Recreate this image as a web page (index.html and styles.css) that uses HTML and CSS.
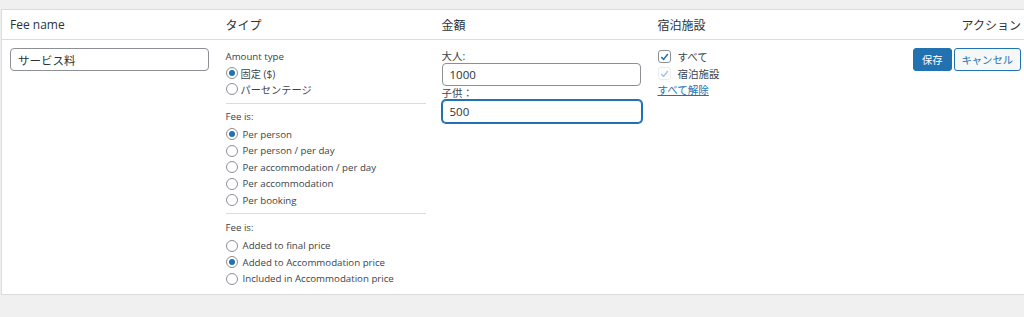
FILE: index.html
```html
<!DOCTYPE html>
<html lang="ja">
<head>
  <meta charset="UTF-8">
  <title>Fees</title>
  <link rel="stylesheet" href="styles.css">
</head>
<body>

  <table class="fees-table">
    <colgroup>
      <col class="col-fixed">
      <col class="col-fixed">
      <col class="col-fixed">
      <col class="col-fixed">
      <col>
    </colgroup>
    <thead>
      <tr>
        <th>Fee name</th>
        <th>タイプ</th>
        <th>金額</th>
        <th>宿泊施設</th>
        <th class="col-actions">アクション</th>
      </tr>
    </thead>
    <tbody>
      <tr>
        <td>
          <input type="text" class="text-input" value="サービス料">
        </td>
        <td>
          <div class="group first">
            <div class="group-title">Amount type</div>
            <label class="radio-row jp"><span class="radio checked"></span>固定 ($)</label>
            <label class="radio-row jp"><span class="radio"></span>パーセンテージ</label>
          </div>
          <div class="group">
            <div class="group-title">Fee is:</div>
            <label class="radio-row"><span class="radio checked"></span>Per person</label>
            <label class="radio-row"><span class="radio"></span>Per person / per day</label>
            <label class="radio-row"><span class="radio"></span>Per accommodation / per day</label>
            <label class="radio-row"><span class="radio"></span>Per accommodation</label>
            <label class="radio-row"><span class="radio"></span>Per booking</label>
          </div>
          <div class="group last">
            <div class="group-title">Fee is:</div>
            <label class="radio-row"><span class="radio"></span>Added to final price</label>
            <label class="radio-row"><span class="radio checked"></span>Added to Accommodation price</label>
            <label class="radio-row"><span class="radio"></span>Included in Accommodation price</label>
          </div>
        </td>
        <td>
          <div class="field-label">大人:</div>
          <input type="text" class="text-input" value="1000">
          <div class="field-label">子供：</div>
          <input type="text" class="text-input focused" value="500">
        </td>
        <td>
          <label class="check-row">
            <span class="checkbox">
              <svg viewBox="0 0 12 12" width="12" height="12"><path d="M2.5 6.2 L5 8.6 L9.6 2.8" fill="none" stroke="#2271b1" stroke-width="1.7"/></svg>
            </span>すべて
          </label>
          <label class="check-row disabled">
            <span class="checkbox">
              <svg viewBox="0 0 12 12" width="12" height="12"><path d="M2.5 6.2 L5 8.6 L9.6 2.8" fill="none" stroke="#a7c4e0" stroke-width="1.7"/></svg>
            </span>宿泊施設
          </label>
          <a href="#" class="link">すべて解除</a>
        </td>
        <td>
          <div class="actions">
            <button class="btn btn-primary">保存</button>
            <button class="btn btn-secondary">キャンセル</button>
          </div>
        </td>
      </tr>
    </tbody>
  </table>

</body>
</html>
```

FILE: styles.css
```css
:root {
  --bg: #f0f0f1;
  --line: #dcdcde;
  --text: #2c3338;
  --muted: #3c434a;
  --blue: #2271b1;
}

html, body {
  margin: 0;
  background: var(--bg);
  overflow: hidden;
}

body {
  padding: 9px 0 0 1px;
  font-family: "Open Sans", "Noto Sans CJK JP", sans-serif;
  color: var(--text);
}

.fees-table {
  width: 1030px;
  table-layout: fixed;
  border-collapse: collapse;
  background: #fff;
  border: 1px solid var(--line);
  box-shadow: 0 1px 1px rgba(0, 0, 0, 0.04);
}

.col-fixed { width: 216px; }

.fees-table th {
  height: 29px;
  padding: 0 8px;
  text-align: left;
  font-weight: normal;
  font-size: 12px;
  color: var(--text);
  border-bottom: 1px solid var(--line);
  white-space: nowrap;
}

.fees-table th.col-actions {
  text-align: right;
  padding-right: 9px;
}

.fees-table td {
  vertical-align: top;
  padding: 8px 8px 7px;
  font-size: 11px;
}

.text-input {
  box-sizing: border-box;
  display: block;
  width: 199px;
  height: 23px;
  padding: 0 7px;
  border: 1px solid #8c8f94;
  border-radius: 4px;
  font-family: inherit;
  font-size: 11.5px;
  color: var(--text);
  background: #fff;
}

.text-input.focused {
  border-color: var(--blue);
  box-shadow: 0 0 0 1px var(--blue);
  width: 200px;
}

/* radio groups in the type column */
.group {
  width: 200px;
  border-bottom: 1px solid var(--line);
  padding-bottom: 4px;
  margin-bottom: 6px;
}

.group.first {
  padding-bottom: 6px;
  margin-bottom: 5px;
}

.group.last {
  border-bottom: none;
  padding-bottom: 0;
  margin-bottom: 0;
}

.group-title {
  color: var(--muted);
  font-size: 9.7px;
  line-height: 15px;
  margin-bottom: 2px;
}

.group.first .group-title {
  line-height: 17px;
  margin-bottom: 0;
}

.group.last .group-title { margin-bottom: 3px; }

.radio-row {
  display: flex;
  align-items: center;
  gap: 5px;
  height: 16.5px;
  color: var(--muted);
  font-size: 9.7px;
}

.radio-row.jp {
  height: 16px;
  font-size: 10.2px;
  gap: 3px;
}

.radio {
  box-sizing: border-box;
  width: 12px;
  height: 12px;
  border: 1px solid #8c8f94;
  border-radius: 50%;
  display: inline-flex;
  align-items: center;
  justify-content: center;
  flex: none;
}

.radio.checked::before {
  content: "";
  width: 6px;
  height: 6px;
  border-radius: 50%;
  background: var(--blue);
}

/* amount column */
.field-label {
  color: var(--muted);
  font-size: 10.5px;
  line-height: 14px;
}

.field-label:first-child { margin-top: 1px; }

/* accommodation column */
.check-row {
  display: flex;
  align-items: center;
  gap: 7px;
  height: 17px;
  color: var(--muted);
  font-size: 10.5px;
}

.checkbox {
  box-sizing: border-box;
  width: 13px;
  height: 13px;
  border: 1px solid #8c8f94;
  border-radius: 3px;
  display: inline-flex;
  align-items: center;
  justify-content: center;
  flex: none;
}

.check-row.disabled .checkbox { border-color: #ececed; }

.link {
  color: var(--blue);
  font-size: 10.5px;
  line-height: 14px;
}

/* actions */
.actions {
  display: flex;
  justify-content: flex-end;
  gap: 2px;
  padding-right: 1px;
}

.btn {
  font-family: inherit;
  font-size: 10.3px;
  height: 23px;
  padding: 0 8px;
  border-radius: 3px;
  border: 1px solid var(--blue);
  cursor: pointer;
}

.btn-primary {
  background: var(--blue);
  color: #fff;
}

.btn-secondary {
  background: #f6f7f7;
  color: var(--blue);
  padding: 0 7px;
}
```
